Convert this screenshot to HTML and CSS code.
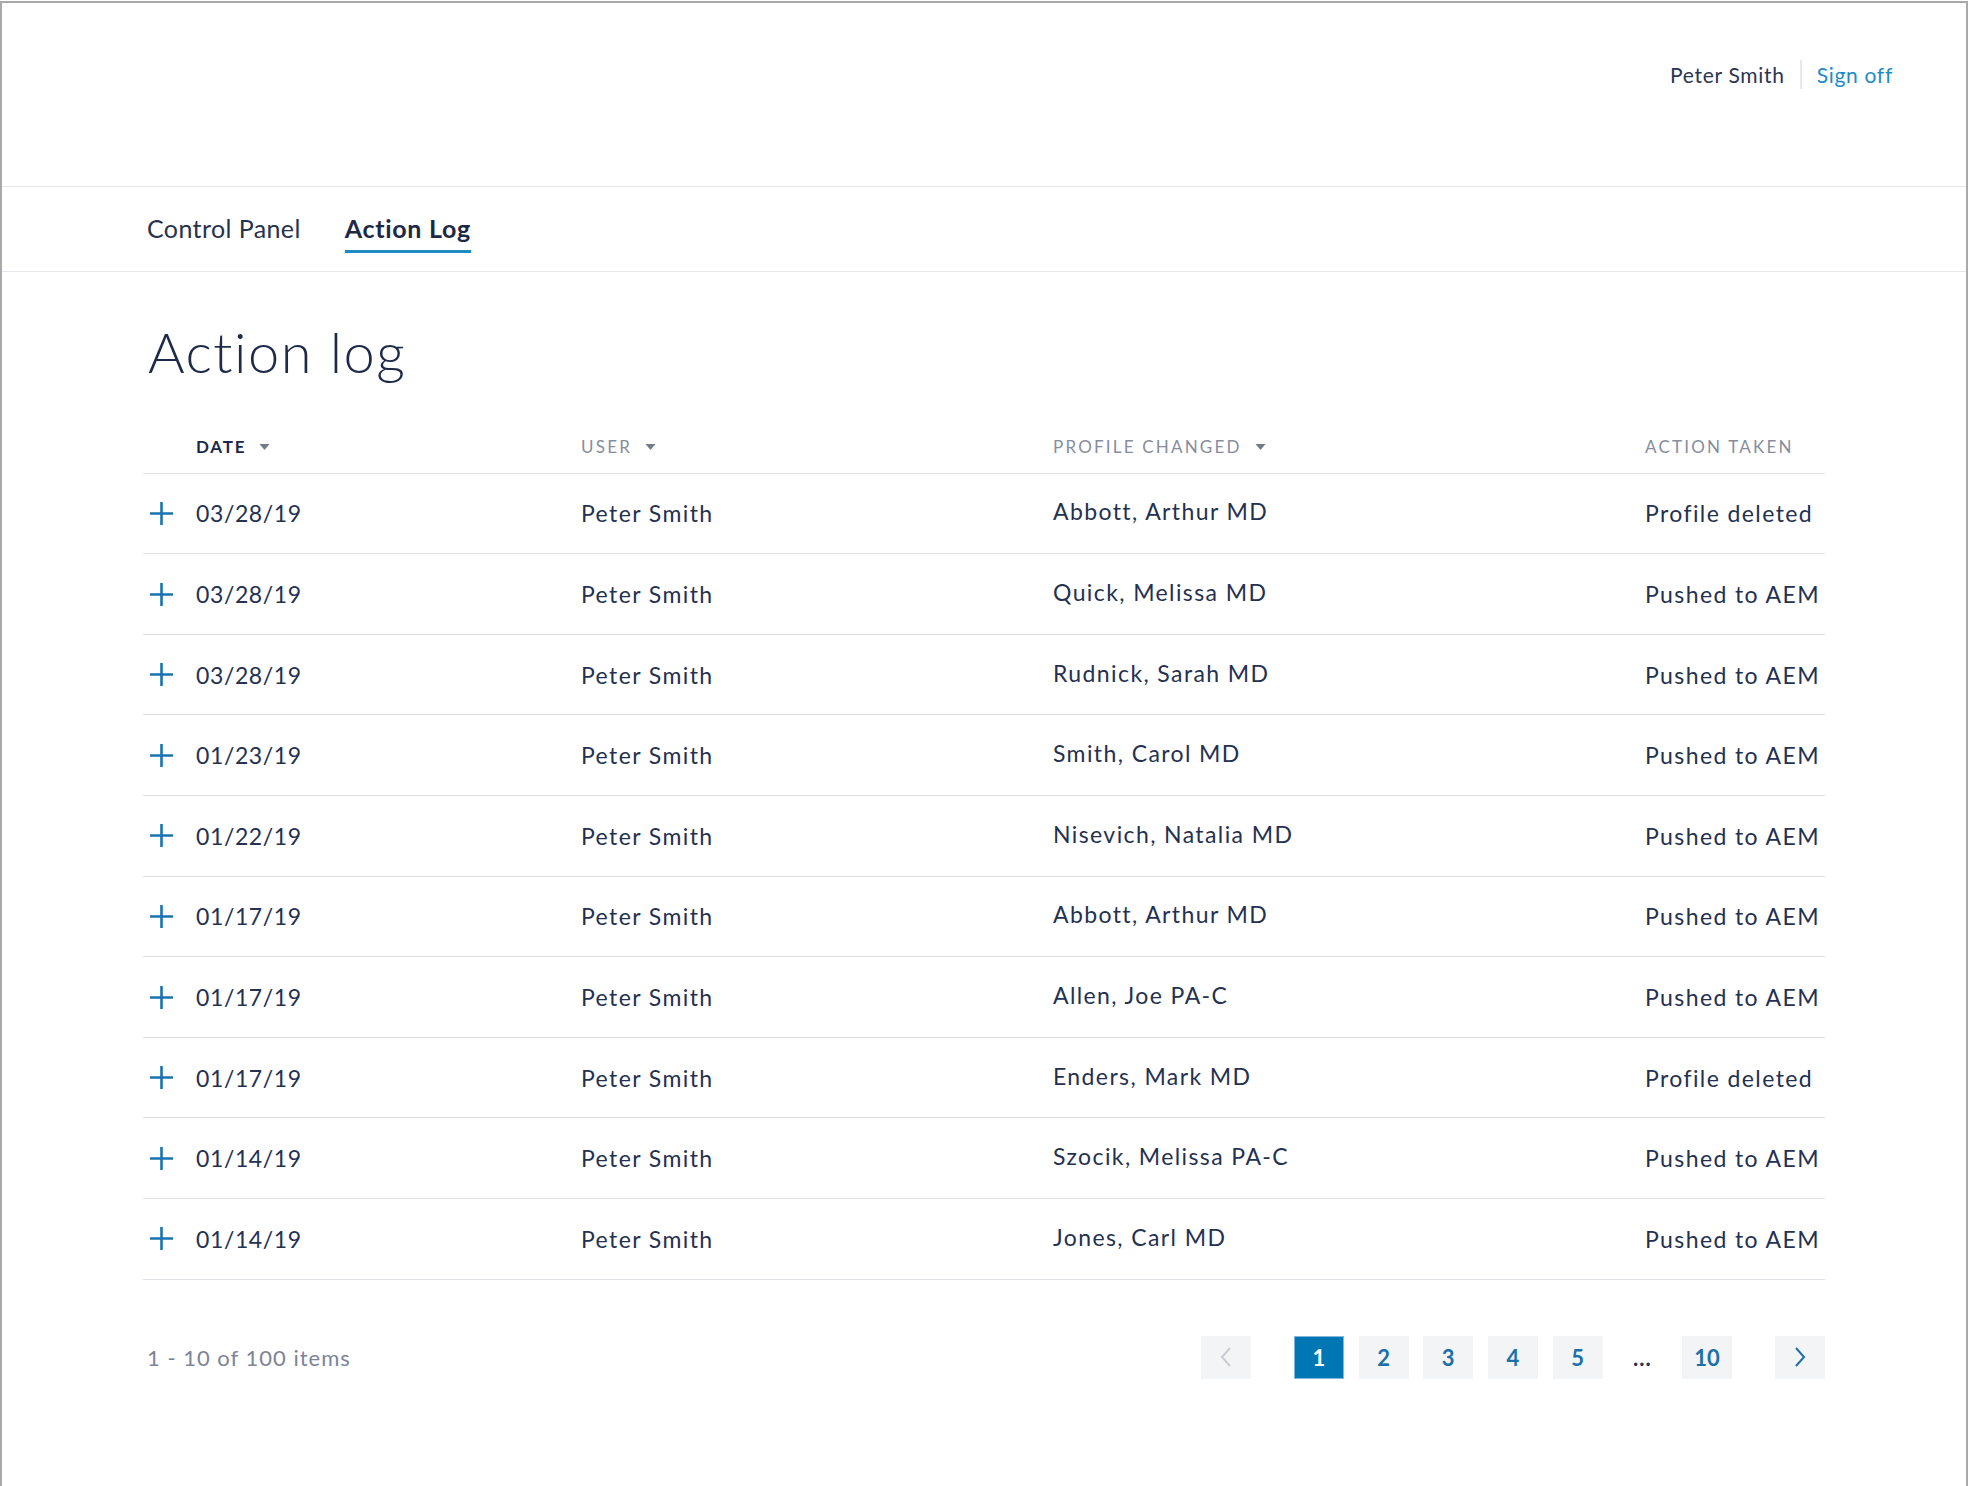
FILE: index.html
```html
<!DOCTYPE html>
<html lang="en">
<head>
<meta charset="utf-8">
<title>Action log</title>
<link rel="stylesheet" href="styles.css">
</head>
<body>
<div class="frame">
  <header class="topbar">
    <div class="user-area">
      <span class="user-name">Peter Smith</span>
      <span class="sep"></span>
      <a class="signoff" href="#">Sign off</a>
    </div>
  </header>
  <nav class="tabs">
    <a class="tab" href="#">Control Panel</a>
    <a class="tab active" href="#">Action Log</a>
  </nav>
  <main class="content">
    <h1 class="title">Action log</h1>
    <div class="table">
      <div class="row head">
        <div class="cell"></div>
        <div class="cell th sorted">DATE <svg class="caret" viewBox="0 0 10 6"><path d="M0 0h10L5 6z"/></svg></div>
        <div class="cell th">USER <svg class="caret" viewBox="0 0 10 6"><path d="M0 0h10L5 6z"/></svg></div>
        <div class="cell th">PROFILE CHANGED <svg class="caret" viewBox="0 0 10 6"><path d="M0 0h10L5 6z"/></svg></div>
        <div class="cell th">ACTION TAKEN</div>
      </div>
      <div class="row"><div class="cell"><svg class="plus" viewBox="0 0 23 23"><path d="M11.5 0v23M0 11.5h23"/></svg></div><div class="cell date">03/28/19</div><div class="cell">Peter Smith</div><div class="cell prof">Abbott, Arthur MD</div><div class="cell">Profile deleted</div></div>
      <div class="row"><div class="cell"><svg class="plus" viewBox="0 0 23 23"><path d="M11.5 0v23M0 11.5h23"/></svg></div><div class="cell date">03/28/19</div><div class="cell">Peter Smith</div><div class="cell prof">Quick, Melissa MD</div><div class="cell">Pushed to AEM</div></div>
      <div class="row"><div class="cell"><svg class="plus" viewBox="0 0 23 23"><path d="M11.5 0v23M0 11.5h23"/></svg></div><div class="cell date">03/28/19</div><div class="cell">Peter Smith</div><div class="cell prof">Rudnick, Sarah MD</div><div class="cell">Pushed to AEM</div></div>
      <div class="row"><div class="cell"><svg class="plus" viewBox="0 0 23 23"><path d="M11.5 0v23M0 11.5h23"/></svg></div><div class="cell date">01/23/19</div><div class="cell">Peter Smith</div><div class="cell prof">Smith, Carol MD</div><div class="cell">Pushed to AEM</div></div>
      <div class="row"><div class="cell"><svg class="plus" viewBox="0 0 23 23"><path d="M11.5 0v23M0 11.5h23"/></svg></div><div class="cell date">01/22/19</div><div class="cell">Peter Smith</div><div class="cell prof">Nisevich, Natalia MD</div><div class="cell">Pushed to AEM</div></div>
      <div class="row"><div class="cell"><svg class="plus" viewBox="0 0 23 23"><path d="M11.5 0v23M0 11.5h23"/></svg></div><div class="cell date">01/17/19</div><div class="cell">Peter Smith</div><div class="cell prof">Abbott, Arthur MD</div><div class="cell">Pushed to AEM</div></div>
      <div class="row"><div class="cell"><svg class="plus" viewBox="0 0 23 23"><path d="M11.5 0v23M0 11.5h23"/></svg></div><div class="cell date">01/17/19</div><div class="cell">Peter Smith</div><div class="cell prof">Allen, Joe PA-C</div><div class="cell">Pushed to AEM</div></div>
      <div class="row"><div class="cell"><svg class="plus" viewBox="0 0 23 23"><path d="M11.5 0v23M0 11.5h23"/></svg></div><div class="cell date">01/17/19</div><div class="cell">Peter Smith</div><div class="cell prof">Enders, Mark MD</div><div class="cell">Profile deleted</div></div>
      <div class="row"><div class="cell"><svg class="plus" viewBox="0 0 23 23"><path d="M11.5 0v23M0 11.5h23"/></svg></div><div class="cell date">01/14/19</div><div class="cell">Peter Smith</div><div class="cell prof">Szocik, Melissa PA-C</div><div class="cell">Pushed to AEM</div></div>
      <div class="row"><div class="cell"><svg class="plus" viewBox="0 0 23 23"><path d="M11.5 0v23M0 11.5h23"/></svg></div><div class="cell date">01/14/19</div><div class="cell">Peter Smith</div><div class="cell prof">Jones, Carl MD</div><div class="cell">Pushed to AEM</div></div>
    </div>
    <div class="footer">
      <div class="count">1 - 10 of 100 items</div>
      <div class="pager">
        <button class="pg arrow prev" aria-label="Previous"><svg viewBox="0 0 12 20"><path d="M10 1L2 10l8 9"/></svg></button>
        <div class="pages">
          <button class="pg num current">1</button>
          <button class="pg num">2</button>
          <button class="pg num">3</button>
          <button class="pg num">4</button>
          <button class="pg num">5</button>
          <span class="pg dots">...</span>
          <button class="pg num">10</button>
        </div>
        <button class="pg arrow next" aria-label="Next"><svg viewBox="0 0 12 20"><path d="M2 1l8 9-8 9"/></svg></button>
      </div>
    </div>
  </main>
</div>
</body>
</html>
```
FILE: styles.css
```css
* { box-sizing: border-box; }
html, body { margin: 0; padding: 0; background: #fff; }
body {
  font-family: "Lato", "Open Sans", sans-serif;
  color: #1f2c4b;
}
.frame {
  margin-top: 1px;
  width: 1968px;
  min-height: 1485px;
  border: 2px solid #a9a9a9;
  border-bottom: 0;
}
.topbar {
  height: 184px;
  border-bottom: 1px solid #e3e6eb;
  display: flex;
  justify-content: flex-end;
  align-items: flex-start;
  padding-right: 73px;
  padding-top: 57px;
}
.user-area {
  display: flex;
  align-items: center;
  gap: 15px;
  font-size: 21px;
  letter-spacing: 0.7px;
  line-height: 28px;
}
.user-name { color: #2a3550; }
.sep { width: 2px; height: 29px; background: #e6e8ec; }
.signoff { color: #1c8bc8; text-decoration: none; }

.tabs {
  height: 85px;
  border-bottom: 1px solid #e3e6eb;
  display: flex;
  gap: 44px;
  padding-left: 145px;
  padding-top: 27px;
  align-items: flex-start;
}
.tab {
  font-size: 25px;
  line-height: 28px;
  letter-spacing: 0.4px;
  color: #27324d;
  text-decoration: none;
  padding-bottom: 8px;
  border-bottom: 3px solid transparent;
}
.tab.active {
  font-weight: 700;
  letter-spacing: 0.7px;
  color: #1c2946;
  border-bottom-color: #1f8bc3;
}

.content {
  margin-left: 141px;
  width: 1682px;
}
.title {
  margin: 46px 0 0 5px;
  font-size: 56px;
  font-weight: 300;
  letter-spacing: 1.5px;
  line-height: 1.2;
  color: #1d2a49;
}

.table { margin-top: 36px; }
.row {
  display: grid;
  grid-template-columns: 53px 385px 472px 592px 1fr;
  align-items: center;
  height: 80.6px;
  border-bottom: 1px solid #dde1e7;
  font-size: 23px;
  letter-spacing: 1.4px;
  color: #243150;
}
.row .date { letter-spacing: 0.6px; }
.row.head {
  height: 52.5px;
  font-size: 17px;
  letter-spacing: 2.2px;
  color: #878d9c;
}
.cell { white-space: nowrap; }
.th { display: flex; align-items: center; gap: 13px; }
.th.sorted { font-weight: 700; letter-spacing: 1.8px; color: #1c2946; }
.caret { width: 11px; height: 6px; fill: #737a8a; }
.plus {
  display: block;
  width: 23px;
  height: 23px;
  margin-left: 7px;
  stroke: #1b74b0;
  stroke-width: 2.6;
  fill: none;
}
.prof { position: relative; top: -2px; }

.footer {
  display: flex;
  justify-content: space-between;
  align-items: center;
  margin-top: 56px;
}
.count {
  font-size: 22px;
  letter-spacing: 1px;
  color: #7d8497;
  padding-left: 4px;
}
.pager { display: flex; align-items: center; gap: 43px; }
.pages { display: flex; align-items: center; gap: 14.7px; }
.pg {
  width: 50px;
  height: 43px;
  border: 0;
  margin: 0;
  padding: 0;
  background: #f3f4f6;
  display: flex;
  align-items: center;
  justify-content: center;
  font-family: inherit;
  font-size: 22px;
  font-weight: 700;
  color: #1b70aa;
}
.pg.current {
  background: #0077b5;
  color: #fff;
  border: 1px solid #7fb8de;
}
.pg.dots {
  background: transparent;
  color: #243150;
  font-weight: 700;
  letter-spacing: 1px;
}
.arrow svg { width: 12px; height: 20px; fill: none; stroke-width: 2; }
.prev svg { stroke: #c9ccd2; }
.next svg { stroke: #1b70aa; }
```
